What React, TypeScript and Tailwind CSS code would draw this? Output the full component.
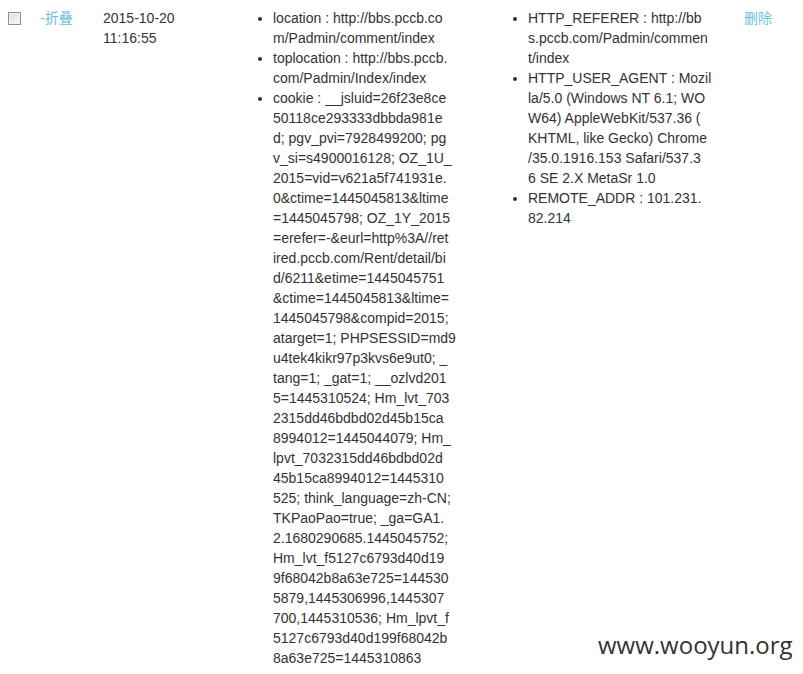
import React from "react";

const col3: string[][] = [
  ["location : http://bbs.pccb.co", "m/Padmin/comment/index"],
  ["toplocation : http://bbs.pccb.", "com/Padmin/Index/index"],
  [
    "cookie : __jsluid=26f23e8ce",
    "50118ce293333dbbda981e",
    "d; pgv_pvi=7928499200; pg",
    "v_si=s4900016128; OZ_1U_",
    "2015=vid=v621a5f741931e.",
    "0&ctime=1445045813&ltime",
    "=1445045798; OZ_1Y_2015",
    "=erefer=-&eurl=http%3A//ret",
    "ired.pccb.com/Rent/detail/bi",
    "d/6211&etime=1445045751",
    "&ctime=1445045813&ltime=",
    "1445045798&compid=2015;",
    "atarget=1; PHPSESSID=md9",
    "u4tek4kikr97p3kvs6e9ut0; _",
    "tang=1; _gat=1; __ozlvd201",
    "5=1445310524; Hm_lvt_703",
    "2315dd46bdbd02d45b15ca",
    "8994012=1445044079; Hm_",
    "lpvt_7032315dd46bdbd02d",
    "45b15ca8994012=1445310",
    "525; think_language=zh-CN;",
    "TKPaoPao=true; _ga=GA1.",
    "2.1680290685.1445045752;",
    "Hm_lvt_f5127c6793d40d19",
    "9f68042b8a63e725=144530",
    "5879,1445306996,1445307",
    "700,1445310536; Hm_lpvt_f",
    "5127c6793d40d199f68042b",
    "8a63e725=1445310863",
  ],
];

const col4: string[][] = [
  ["HTTP_REFERER : http://bb", "s.pccb.com/Padmin/commen", "t/index"],
  [
    "HTTP_USER_AGENT : Mozil",
    "la/5.0 (Windows NT 6.1; WO",
    "W64) AppleWebKit/537.36 (",
    "KHTML, like Gecko) Chrome",
    "/35.0.1916.153 Safari/537.3",
    "6 SE 2.X MetaSr 1.0",
  ],
  ["REMOTE_ADDR : 101.231.", "82.214"],
];

function List({ items }: { items: string[][] }) {
  return (
    <ul className="list-disc pl-[12px]">
      {items.map((lines, i) => (
        <li key={i} className="whitespace-nowrap">
          {lines.map((l, j) => (
            <React.Fragment key={j}>
              {j > 0 && <br />}
              {l}
            </React.Fragment>
          ))}
        </li>
      ))}
    </ul>
  );
}

export default function App() {
  return (
    <div
      className="relative w-[803px] h-[674px] overflow-hidden bg-white text-[14px] leading-[20px] text-[#333]"
      style={{ fontFamily: '"Liberation Sans", Arial, "Noto Sans CJK SC", sans-serif' }}
    >
      <div className="flex items-start pt-[8px]">
        <div className="w-[40px] pl-[8px] pt-[4px]">
          <div className="w-[13px] h-[13px] border border-[#8f8f8f] bg-gradient-to-br from-[#dcdcdc] to-[#fafafa] shadow-[inset_0_0_0_1px_#f4f4f4]" />
        </div>
        <div className="w-[63px] text-[#6ec2dd]">-折叠</div>
        <div className="w-[158px]">
          <div className="w-[80px]">2015-10-20 11:16:55</div>
        </div>
        <div className="w-[255px]">
          <List items={col3} />
        </div>
        <div className="w-[228px]">
          <List items={col4} />
        </div>
        <div className="text-[#6ec2dd]">删除</div>
      </div>
      <div
        className="absolute left-[598px] top-[627px] text-[24px] leading-[36px] text-[#333]"
        style={{ fontFamily: '"Open Sans", sans-serif' }}
      >
        www.wooyun.org
      </div>
    </div>
  );
}
